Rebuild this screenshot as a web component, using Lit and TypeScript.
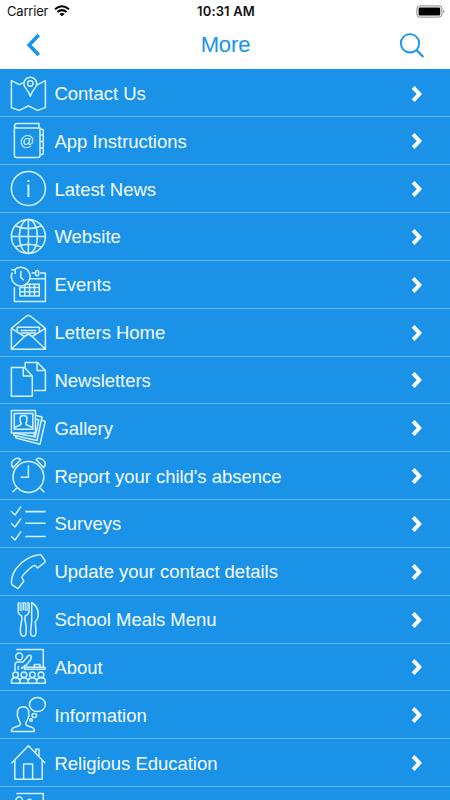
import { LitElement, html, css, svg } from "lit";
import { customElement, property } from "lit/decorators.js";

const classroom = svg`
  <path d="M7 2.3V1.6H33.3V20M12 21.3V19.3H35V21.3H15M24.3 18.6V16.5H30V18.6"/>
  <circle cx="9.2" cy="8.5" r="3.4"/>
  <path d="M5 23V17Q5 14 8 14H13L17.5 8.5Q19.5 6.2 21.5 8.5L20.5 12L16 17.4H14.5V22M8.3 22V18"/>
  <path d="M1.5 35.3V32.5Q2 29.8 5 29.8Q9 29.8 9.8 32.5Q10.5 29.8 13.8 29.8Q17.3 29.8 18.2 32.5Q19 29.8 22.3 29.8Q26 29.8 26.7 32.5Q27.5 29.8 31 29.8Q35 29.8 35.3 32.5V35.3ZM9.8 32.5V35M18.2 32.5V35M26.7 32.5V35"/>
  <circle cx="5.6" cy="26.7" r="2.8"/><circle cx="14" cy="26.7" r="2.8"/><circle cx="22.4" cy="26.7" r="2.8"/><circle cx="31" cy="26.7" r="2.8"/>`;

const icons = {
  map: svg`
    <path d="M14 7.4L9.3 9.7L1.4 5.6V32.8L9.3 35.4L18.3 30.8L27.7 35.4L35.4 32.6V5.6L27.7 9.7L26.5 9"/>
    <path d="M20.3 21.2Q18.8 17 15.8 13.2A6.4 6.4 0 1 1 24.8 13.2Q21.8 17 20.3 21.2Z"/>
    <circle cx="20.3" cy="8.5" r="2.7"/>`,
  book: svg`
    <path d="M5 3.2Q5 1.6 7 1.6H29V6H7Q4.4 6 4.4 3.5V33.4Q4.4 35.4 6.4 35.4H28Q30 35.4 30 33.4V6H7"/>
    <path d="M30 7.2H32.5L33.3 8V12L32.5 13H30M32.5 13L33.3 14V18.5L32.5 19.5H30M32.5 19.5L33.3 20.5V25L32.5 26H30M32.5 26L33.3 27V31.5L32.5 32.5H30"/>
    <text class="at" x="16.8" y="24">@</text>`,
  info: svg`
    <circle cx="18.4" cy="18.4" r="17"/>
    <path stroke-width="2" d="M18.4 10V12.1M18.4 14.5V27"/>`,
  globe: svg`
    <circle cx="18.4" cy="18.4" r="17"/>
    <ellipse cx="18.4" cy="18.4" rx="9" ry="17"/>
    <path d="M18.4 1.4V35.4M1.4 18.4H35.4M5 7.7Q18.4 13.5 31.8 7.7M5 29.1Q18.4 23.3 31.8 29.1"/>`,
  events: svg`
    <path d="M4.4 21V35.4H35.4V7H30M25.4 7H21.5M19.5 12.7H35.4"/>
    <rect x="25.7" y="4.4" width="3" height="5.4" rx="1"/>
    <path d="M4 4.2A9.3 9.3 0 1 1 2.4 6.5M1.3 3.7H5.2V8M10.8 4.8V11.4L13.8 14.2"/>
    <path d="M15 18.3H29.3V30H9.8V21.4H29.3M9.8 25.7H29.3M14.7 21.4V30M19.6 18.3V30M24.5 18.3V30M15 18.3V21.4"/>`,
  letter: svg`
    <path d="M1.4 14.4L15.8 2.5Q18.4 .6 21 2.5L35.4 14.4V35.2H1.4ZM1.4 14.4L14.5 22.5L18.4 20L22.3 22.5L35.4 14.4M14.5 22.5L1.4 35.2M22.3 22.5L35.4 35.2"/>
    <path d="M7.3 18V13.3H29.4V18M10.6 16.5H26.3M10.6 19H26.3"/>`,
  papers: svg`
    <path d="M1.4 6.6H14.5L22.3 15V35.3H1.4ZM13.3 6.8V15H22M15.2 6.2V1.5H27.5L35.4 9.5V29.5H24M27 1.8V9.6H35"/>`,
  gallery: svg`
    <rect x="1.4" y="1.5" width="24" height="22.5"/>
    <rect x="4.3" y="4.5" width="18.5" height="15.8"/>
    <path d="M4.5 20V18.5L10.5 15.8L11.3 14.8Q9.8 13 10 9Q10.3 6.4 13.5 6.4Q16.8 6.4 17 9Q17.2 13 15.7 14.8L16.5 15.8L22.5 18.5V20"/>
    <path d="M3.5 24.2L4 26.2L27 31.5L32 8L25.5 6.3M5.5 27L6 29L30 35.2L35.2 12.5L31.5 11M25 24L23.5 27.5L3.8 24M25.5 10L28.8 11L25.2 28.2L23.5 27.5"/>`,
  alarm: svg`
    <circle cx="18.4" cy="20" r="15.4"/>
    <path d="M18.4 8.6V20.2H10.8M6.7 31L2.5 35.3M30.1 31L34.3 35.3"/>
    <path d="M3 10.7Q-.2 6.5 3.5 3Q7.3-.2 10.8 2.6ZM33.8 10.7Q37 6.5 33.3 3Q29.5-.2 26 2.6Z"/>`,
  checks: svg`
    <path d="M1.2 6.2L5 10L11 1.5M1.2 18.2L5 22L11 13.5M1.2 31.2L5 35L11 26.5"/>
    <path stroke-width="1.6" d="M15.2 6.6H35.6M15.2 18.3H35.6M15.2 31.5H35.6"/>`,
  phone: svg`
    <path d="M7 35.2Q8 35.7 8.8 34.8L13.5 28.5Q14 27.7 13 26.8L12 24.7Q12 22.8 16.8 18.3Q21.2 13.8 24 12.6Q25.8 12 26.6 14.1Q27.3 15.2 28.4 14.3L34.7 9.4Q35.6 8.5 34.8 7.2L31.2 2.2Q30.5 1.2 28.8 1.7Q16 3.7 8 13.6Q1.5 20.5 1.4 29.7Q1.4 31.3 2.8 32.3Z"/>`,
  cutlery: svg`
    <path d="M8.2 1.7V10.5Q8.4 13.4 11.5 14.8L12 18Q10.2 25 10.4 30.8Q10.8 35.3 13.4 35.3Q16 35.3 16.3 30.8Q16.5 25 14.8 18L15.3 14.8Q18.8 13.4 19 10.5V1.7"/>
    <path stroke-width="1.1" d="M8.2 1.7H10.1V9.3H11.9V1.7M11.9 1.7H15.3V9.3H17.1V1.7H19M13.6 1.7V9.3"/>
    <path d="M21.7 1.5Q28.5 5.4 28.2 14Q28 18.3 25.3 20.7L26 30.5Q26 35.3 23.3 35.3Q20.5 35.3 20.6 30.5L21.7 20Z"/>`,
  classroom,
  thought: svg`
    <path d="M1.5 35.4V33.8Q2 31.9 5 31.2L10 29.2Q10.8 28 10.2 26.5Q8.5 24 8 21.5Q6.8 19.5 7.5 18Q6.8 11 13 10.7Q19.3 10.8 18.7 18Q19.5 19.5 18.2 21.5Q17.8 24 16 26.5Q15.5 28 16.2 29.2L21.5 31.2Q24 31.9 24.3 33.8V35.4Z"/>
    <ellipse cx="27.4" cy="8.6" rx="8" ry="7"/>
    <ellipse cx="24.3" cy="19.5" rx="2.3" ry="2"/><circle cx="21" cy="24" r="1.3"/>`,
  house: svg`
    <path d="M1.5 19.2L18.4 1.7L35.3 19.2M4.8 16.3V35.3H32.2V16.3M13.6 35V20H22.6V35M25.8 8.5V5.3H29V12.2"/>`,
};

type IconName = keyof typeof icons;

const rows: Array<{ icon: IconName; label: string }> = [
  { icon: "map", label: "Contact Us" },
  { icon: "book", label: "App Instructions" },
  { icon: "info", label: "Latest News" },
  { icon: "globe", label: "Website" },
  { icon: "events", label: "Events" },
  { icon: "letter", label: "Letters Home" },
  { icon: "papers", label: "Newsletters" },
  { icon: "gallery", label: "Gallery" },
  { icon: "alarm", label: "Report your child's absence" },
  { icon: "checks", label: "Surveys" },
  { icon: "phone", label: "Update your contact details" },
  { icon: "cutlery", label: "School Meals Menu" },
  { icon: "classroom", label: "About" },
  { icon: "thought", label: "Information" },
  { icon: "house", label: "Religious Education" },
  { icon: "classroom", label: "" },
];

@customElement("menu-row")
export class MenuRow extends LitElement {
  @property() icon: IconName = "map";
  @property() label = "";

  static styles = css`
    :host {
      display: flex;
      align-items: center;
      box-sizing: border-box;
      flex: none;
      height: 47.83px;
      padding: 0 27px 0 10px;
      border-bottom: 1px solid #62b9f2;
      color: #f3fbff;
      font: 18.5px/24px "Liberation Sans", Arial, sans-serif;
    }
    .icon {
      flex: none;
      width: 37px;
      height: 37px;
      fill: none;
      stroke: #d3f1ff;
      stroke-width: 1.5;
      stroke-linejoin: round;
    }
    .at {
      fill: #d3f1ff;
      stroke: none;
      font-size: 14.5px;
      text-anchor: middle;
    }
    .label {
      flex: 1;
      margin-left: 7.5px;
      padding-top: 2px;
      letter-spacing: -0.03px;
      white-space: nowrap;
    }
    .arrow {
      flex: none;
      width: 12px;
      height: 18px;
      margin-top: 1px;
      fill: none;
      stroke: #fff;
      stroke-width: 3.9;
    }
  `;

  render() {
    return html`
      <svg class="icon" viewBox="0 0 37 37">${icons[this.icon]}</svg>
      <span class="label">${this.label}</span>
      <svg class="arrow" viewBox="0 0 12 18"><path d="M2.2 2.4L8.3 9L2.2 15.6" /></svg>
    `;
  }
}

@customElement("app-root")
export class AppRoot extends LitElement {
  static styles = css`
    :host {
      display: flex;
      flex-direction: column;
      height: 800px;
      overflow: hidden;
      background: #1a92e8;
      font-family: "Liberation Sans", Arial, sans-serif;
    }
    .status {
      display: grid;
      grid-template-columns: 1fr auto 1fr;
      align-items: center;
      flex: none;
      height: 22px;
      padding: 0 5px 0 7px;
      background: #fff;
      color: #111;
      font: 13px/22px Inter, sans-serif;
    }
    .carrier {
      display: flex;
      align-items: center;
      gap: 6px;
      letter-spacing: -0.2px;
    }
    .wifi {
      width: 16px;
      height: 12px;
    }
    .time {
      font-weight: 600;
      letter-spacing: 0.15px;
    }
    .battery {
      justify-self: end;
      width: 29px;
      height: 13px;
    }
    .nav {
      display: grid;
      grid-template-columns: 1fr auto 1fr;
      align-items: center;
      flex: none;
      height: 47px;
      padding: 0 24px 0 25px;
      background: #fff;
      color: #1494ea;
    }
    .title {
      font-size: 22px;
      line-height: 44px;
      letter-spacing: -0.1px;
      padding-bottom: 2px;
    }
    .back {
      width: 17px;
      height: 24px;
      margin-bottom: 1px;
      fill: none;
      stroke: currentColor;
      stroke-width: 3.6;
    }
    .search {
      justify-self: end;
      width: 27px;
      height: 27px;
      fill: none;
      stroke: currentColor;
      stroke-width: 1.8;
    }
    .list {
      display: flex;
      flex-direction: column;
      flex: 1;
      min-height: 0;
      padding-top: 0.6px;
      overflow: hidden;
    }
  `;

  render() {
    return html`
      <div class="status">
        <div class="carrier">
          <span>Carrier</span>
          <svg class="wifi" viewBox="0 0 16 12">
            <path d="M1 4.2Q8-1.6 15 4.2M3.4 7Q8 3.2 12.6 7" fill="none" stroke="#000" stroke-width="2" />
            <path d="M8 11.3L5.4 8.9Q8 6.9 10.6 8.9Z" />
          </svg>
        </div>
        <span class="time">10:31 AM</span>
        <svg class="battery" viewBox="0 0 29 13">
          <rect x=".9" y=".9" width="25" height="11.2" rx="3" fill="none" stroke="#888" />
          <rect x="2.6" y="2.6" width="21.6" height="7.8" rx="1.2" />
          <path d="M27.4 4.5Q29.5 6.5 27.4 8.5Z" fill="#777" />
        </svg>
      </div>
      <div class="nav">
        <svg class="back" viewBox="0 0 17 24"><path d="M13.7 2L4.2 12L13.7 22" /></svg>
        <span class="title">More</span>
        <svg class="search" viewBox="0 0 27 27">
          <circle cx="11" cy="11.3" r="9.2" /><path d="M17.5 18L24.3 24.9" stroke-width="2.2" />
        </svg>
      </div>
      <div class="list">
        ${rows.map((r) => html`<menu-row .icon=${r.icon} .label=${r.label}></menu-row>`)}
      </div>
    `;
  }
}
